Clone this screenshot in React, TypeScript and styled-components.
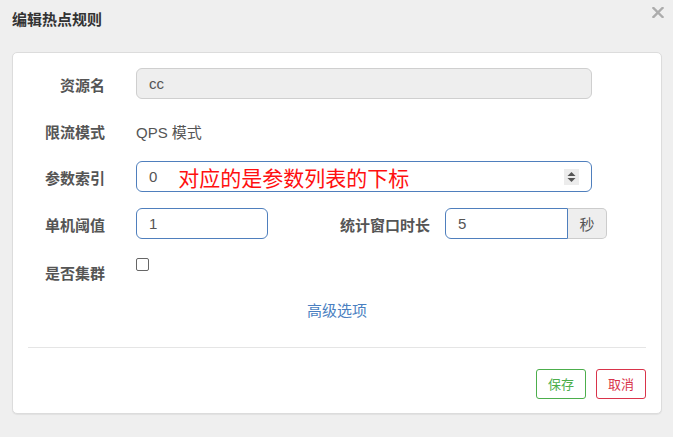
import React from "react";
import styled, { createGlobalStyle } from "styled-components";

const GlobalStyle = createGlobalStyle`
  html, body {
    margin: 0;
    padding: 0;
    background: #efefef;
    font-family: "Liberation Sans", "Noto Sans CJK SC", sans-serif;
    color: #555;
  }
  * { box-sizing: border-box; }
`;

const Page = styled.div`
  width: 673px;
  height: 437px;
  padding: 0 11px 0 12px;
`;

const Header = styled.div`
  display: flex;
  justify-content: space-between;
  align-items: flex-start;
  height: 52px;
  padding-top: 10px;
`;

const Title = styled.h4`
  margin: 0;
  font-size: 15px;
  line-height: 20px;
  font-weight: bold;
  color: #333;
`;

const Close = styled.button`
  border: none;
  background: transparent;
  padding: 0;
  margin: -5px -3px 0 0;
  width: 14px;
  height: 14px;
  display: flex;
  align-items: center;
  justify-content: center;
  cursor: pointer;
`;

const Card = styled.div`
  background: #fff;
  border: 1px solid #dcdcdc;
  border-radius: 5px;
  box-shadow: 0 1px 1px rgba(0, 0, 0, 0.06);
  padding: 15px 15px 14px;
`;

const Row = styled.div<{ $gap?: number }>`
  display: flex;
  align-items: flex-start;
  height: 31px;
  margin-bottom: ${(p) => p.$gap ?? 15.5}px;
`;

const Label = styled.label<{ $w?: number; $pt?: number; $mr?: number }>`
  flex-shrink: 0;
  width: ${(p) => p.$w ?? 77}px;
  margin-right: ${(p) => p.$mr ?? 31}px;
  padding-top: ${(p) => p.$pt ?? 8}px;
  text-align: right;
  font-size: 15px;
  line-height: 20px;
  font-weight: bold;
  color: #555;
  white-space: nowrap;
`;

const StaticText = styled.div`
  padding-top: 8px;
  font-size: 15px;
  line-height: 20px;
  color: #555;
`;

const Field = styled.div<{ $w: number; $disabled?: boolean; $side?: "left" | "full" }>`
  display: flex;
  align-items: center;
  width: ${(p) => p.$w}px;
  height: 31px;
  padding: 0 12px;
  font-size: 15px;
  color: #555;
  background: ${(p) => (p.$disabled ? "#eee" : "#fff")};
  border: 1px solid ${(p) => (p.$disabled ? "#cfcfcf" : "#4f7fbd")};
  border-radius: ${(p) => (p.$side === "left" ? "6px 0 0 6px" : "6px")};
`;

const Note = styled.span`
  margin-left: 21px;
  font-family: "Noto Sans CJK SC", sans-serif;
  font-size: 21px;
  line-height: 24px;
  color: #ff1010;
  white-space: nowrap;
`;

const Spinner = styled.span`
  margin-left: auto;
  width: 15px;
  height: 16px;
  background: #ececec;
  display: flex;
  align-items: center;
  justify-content: center;
`;

const Addon = styled.div`
  width: 39px;
  height: 31px;
  display: flex;
  align-items: center;
  justify-content: center;
  background: #eee;
  border: 1px solid #ccc;
  border-left: none;
  border-radius: 0 5px 5px 0;
  font-size: 15px;
  color: #555;
`;

const Check = styled.input`
  appearance: none;
  margin: 4px 0 0;
  width: 13px;
  height: 13px;
  border: 1px solid #666;
  border-radius: 2px;
  background: #fff;
`;

const Advanced = styled.a`
  display: block;
  text-align: center;
  font-size: 15px;
  line-height: 20px;
  color: #4a7fc1;
  text-decoration: none;
  margin: 0 0 26px;
  cursor: pointer;
`;

const Divider = styled.hr`
  margin: 0 0 21px;
  border: none;
  border-top: 1px solid #e5e5e5;
`;

const Footer = styled.div`
  display: flex;
  justify-content: flex-end;
  gap: 10px;
`;

const Btn = styled.button<{ $tone: "save" | "cancel" }>`
  width: 50px;
  height: 30px;
  padding: 0;
  background: #fff;
  border: 1px solid ${(p) => (p.$tone === "save" ? "#4cae4c" : "#d9334a")};
  color: ${(p) => (p.$tone === "save" ? "#4cae4c" : "#d9334a")};
  border-radius: 3px;
  font-family: "Noto Sans CJK SC", sans-serif;
  font-size: 13px;
  cursor: pointer;
`;

export default function App() {
  return (
    <Page>
      <GlobalStyle />
      <Header>
        <Title>编辑热点规则</Title>
        <Close aria-label="close">
          <svg width="12" height="11" viewBox="0 0 12 11">
            <path d="M1.5 1 L10.5 10 M10.5 1 L1.5 10" stroke="#acacac" strokeWidth="2.4" strokeLinecap="square" />
          </svg>
        </Close>
      </Header>
      <Card>
        <Row>
          <Label>资源名</Label>
          <Field $w={456} $disabled>cc</Field>
        </Row>
        <Row>
          <Label>限流模式</Label>
          <StaticText>QPS 模式</StaticText>
        </Row>
        <Row>
          <Label>参数索引</Label>
          <Field $w={456}>
            0<Note>对应的是参数列表的下标</Note>
            <Spinner>
              <svg width="15" height="16" viewBox="0 0 15 16">
                <path d="M7.5 3 L11.5 7 L3.5 7 Z M3.5 9 L11.5 9 L7.5 13 Z" fill="#555" />
              </svg>
            </Spinner>
          </Field>
        </Row>
        <Row>
          <Label>单机阈值</Label>
          <Field $w={132}>1</Field>
          <Label $w={162} $mr={15}>统计窗口时长</Label>
          <Field $w={123} $side="left">5</Field>
          <Addon>秒</Addon>
        </Row>
        <Row>
          <Label $pt={10}>是否集群</Label>
          <Check type="checkbox" />
        </Row>
        <Advanced>高级选项</Advanced>
        <Divider />
        <Footer>
          <Btn $tone="save">保存</Btn>
          <Btn $tone="cancel">取消</Btn>
        </Footer>
      </Card>
    </Page>
  );
}
